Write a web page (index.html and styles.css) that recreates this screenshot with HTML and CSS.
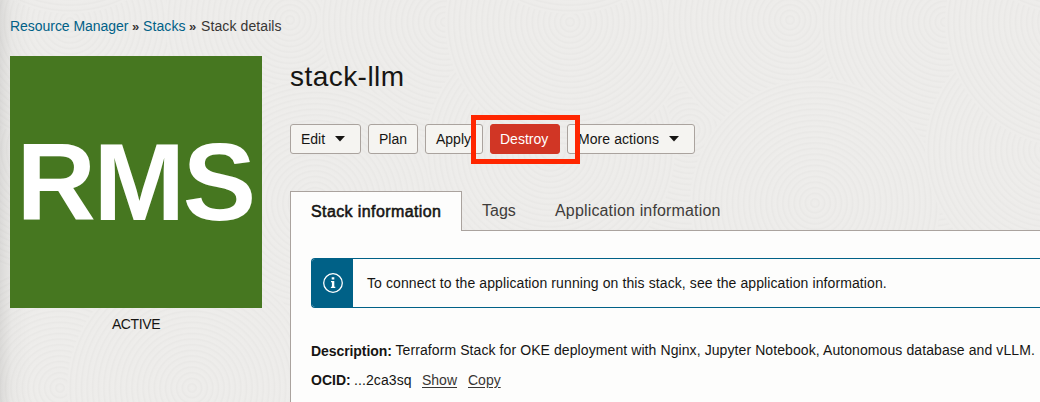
FILE: index.html
```html
<!DOCTYPE html>
<html lang="en">
<head>
<meta charset="utf-8">
<title>Stack details</title>
<link rel="stylesheet" href="styles.css">
</head>
<body>
<svg class="texture" width="1040" height="402" aria-hidden="true">
  <defs>
    <radialGradient id="rings" gradientUnits="userSpaceOnUse" cx="0" cy="0" r="5.6" spreadMethod="repeat">
      <stop offset="0" stop-color="#eeedeb"/>
      <stop offset=".45" stop-color="#edecea"/>
      <stop offset=".75" stop-color="#e9e8e6"/>
      <stop offset="1" stop-color="#eeedeb"/>
    </radialGradient>
    <circle id="disc" r="125" fill="url(#rings)"/>
    <g id="tile">
      <use href="#disc" x="190" y="130"/>
      <use href="#disc" x="430" y="155"/>
      <use href="#disc" x="50" y="150"/>
      <use href="#disc" x="320" y="17"/>
      <use href="#disc" x="70" y="22"/>
      <use href="#disc" x="290" y="20"/>
      <use href="#disc" x="445" y="22"/>
      <use href="#disc" x="570" y="150"/>
      <use href="#disc" x="315" y="203"/>
      <use href="#disc" x="60" y="388"/>
      <use href="#disc" x="192" y="388"/>
      <use href="#disc" x="70" y="-111"/>
    </g>
  </defs>
  <rect width="1040" height="402" fill="#edecea"/>
  <use href="#tile" x="-500"/>
  <use href="#tile"/>
  <use href="#tile" x="500"/>
  <use href="#tile" x="1000"/>
</svg>
<div class="page">
  <nav class="breadcrumb">
    <a class="crumb crumb-manager">Resource Manager</a><span class="separator">»</span><a class="crumb crumb-stacks">Stacks</a><span class="separator">»</span><span class="current">Stack details</span>
  </nav>
  <div class="columns">
    <aside class="side">
      <div class="tile"><span>RMS</span></div>
      <div class="status">ACTIVE</div>
    </aside>
    <main class="main">
      <h1 class="title">stack-llm</h1>
      <div class="toolbar">
        <button class="button edit">Edit<svg class="caret" width="10" height="6"><path d="M0 0H10L5 5.6Z"/></svg></button>
        <button class="button plan">Plan</button>
        <button class="button apply">Apply</button>
        <div class="destroy-wrap"><button class="button destroy">Destroy</button><div class="highlight"></div></div>
        <button class="button more">More actions<svg class="caret" width="10" height="6"><path d="M0 0H10L5 5.6Z"/></svg></button>
      </div>
      <div class="tabs">
        <div class="tab active"><span>Stack information</span></div>
        <div class="tab tags"><span>Tags</span></div>
        <div class="tab app"><span>Application information</span></div>
      </div>
      <section class="panel">
        <div class="notice">
          <div class="notice-icon">
            <svg width="20" height="20" viewBox="0 0 20 20" fill="none" stroke="#fff"><circle cx="10" cy="10" r="9.3" stroke-width="1.3"/><path d="M10 4.2V6.6" stroke-width="2.6"/><path d="M8 8.6H10M7.9 14.4H12.3" stroke-width="1.4"/><path d="M10.1 8V15" stroke-width="2.4"/></svg>
          </div>
          <div class="notice-text">To connect to the application running on this stack, see the application information.</div>
        </div>
        <div class="field"><b class="desc-label">Description:</b><span class="desc">Terraform Stack for OKE deployment with Nginx, Jupyter Notebook, Autonomous database and vLLM.</span></div>
        <div class="field ocid"><b>OCID:</b><span class="value">...2ca3sq</span><a class="link show">Show</a><a class="link copy">Copy</a></div>
      </section>
    </main>
  </div>
</div>
</body>
</html>
```
FILE: styles.css
```css
* { box-sizing: border-box; }
body {
  margin: 0;
  width: 1040px;
  height: 402px;
  overflow: hidden;
  background: #edecea;
  color: #161513;
  font: 14px/20px "Liberation Sans", Arial, sans-serif;
  white-space: nowrap;
}
.texture { position: absolute; left: 0; top: 0; z-index: -1; }
.page {
  height: 402px;
  padding: 16px 0 0 10px;
  background: linear-gradient(90deg, rgba(0,0,0,.08), rgba(0,0,0,.02) 12px, transparent 32px);
}
.breadcrumb { display: flex; height: 20px; color: #383634; }
.crumb { color: #006187; }
.crumb-manager { width: 118px; letter-spacing: -.04px; }
.crumb-stacks { width: 43px; letter-spacing: .1px; }
.current { letter-spacing: .1px; }
.separator { width: 15px; padding-left: 4px; font-weight: bold; font-size: 13px; line-height: 21px; }
.crumb-stacks + .separator { padding-left: 3px; }
.columns { display: flex; gap: 28px; margin-top: 20px; }
.side { width: 252px; flex: none; }
.tile {
  height: 252px;
  display: flex;
  align-items: center;
  justify-content: center;
  background: #467720;
  color: #fff;
  font: bold 110px/252px "Liberation Sans", Arial, sans-serif;
  letter-spacing: -2.4px;
}
.tile span { margin-right: 2px; }
.status { margin-top: 6px; text-align: center; letter-spacing: -.4px; }
.main { width: 750px; flex: none; }
.title { margin: 5px 0 0; height: 32px; font-size: 28px; line-height: 32px; font-weight: normal; letter-spacing: .45px; }
.toolbar { display: flex; gap: 7px; margin-top: 31px; }
.button {
  height: 30px;
  margin: 0;
  padding: 0 10px;
  display: flex;
  align-items: center;
  border: 1px solid #aaa39e;
  border-radius: 3px;
  background: #f5f4f1;
  color: #161513;
  font: 14px/20px "Liberation Sans", Arial, sans-serif;
  white-space: nowrap;
}
.caret { margin-left: auto; fill: #161513; }
.edit { width: 71px; padding-right: 15px; }
.plan { width: 50px; }
.apply { width: 58px; }
.more { width: 128px; padding-right: 15px; letter-spacing: .07px; }
.destroy { width: 70px; padding-left: 9px; background: #d13625; border-color: #d13625; color: #fff; }
.destroy-wrap { position: relative; }
.highlight { position: absolute; z-index: 1; left: -19.5px; top: -9px; width: 109px; height: 49px; border: 5px solid #ff2600; }
.tabs { display: flex; height: 40px; margin-top: 37px; border-bottom: 1px solid #aaa39e; font-size: 16px; color: #3f3c3a; }
.tab { height: 39px; line-height: 39px; }
.active {
  width: 172px;
  height: 40px;
  padding-left: 20px;
  line-height: 40px;
  border: 1px solid #aaa39e;
  border-bottom: 0;
  background: #fdfdfc;
  color: #161513;
  -webkit-text-stroke: .55px #161513;
  letter-spacing: .4px;
}
.tags { width: 93px; padding-left: 20px; }
.app { letter-spacing: .16px; }
.panel { height: 172px; padding: 27px 0 0 20px; border-left: 1px solid #aaa39e; background: #fdfdfc; }
.notice { display: flex; height: 50px; border: 1px solid #006187; border-right: 0; border-radius: 4px 0 0 4px; overflow: hidden; }
.notice-icon { width: 41px; display: grid; place-items: center; background: #006187; }
.notice-icon svg { display: block; }
.notice-text { padding-left: 14px; line-height: 48px; letter-spacing: .1px; }
.field { display: flex; margin-top: 32px; height: 20px; }
.desc-label { width: 84.5px; padding-top: 1px; letter-spacing: -.08px; }
.desc { letter-spacing: .088px; }
.ocid { margin-top: 10px; }
.ocid b { width: 43px; }
.value { width: 68px; letter-spacing: .1px; }
.link { color: #383634; text-decoration: underline; text-underline-offset: 2px; }
.show { width: 46px; }
.show, .copy { display: block; }
```
